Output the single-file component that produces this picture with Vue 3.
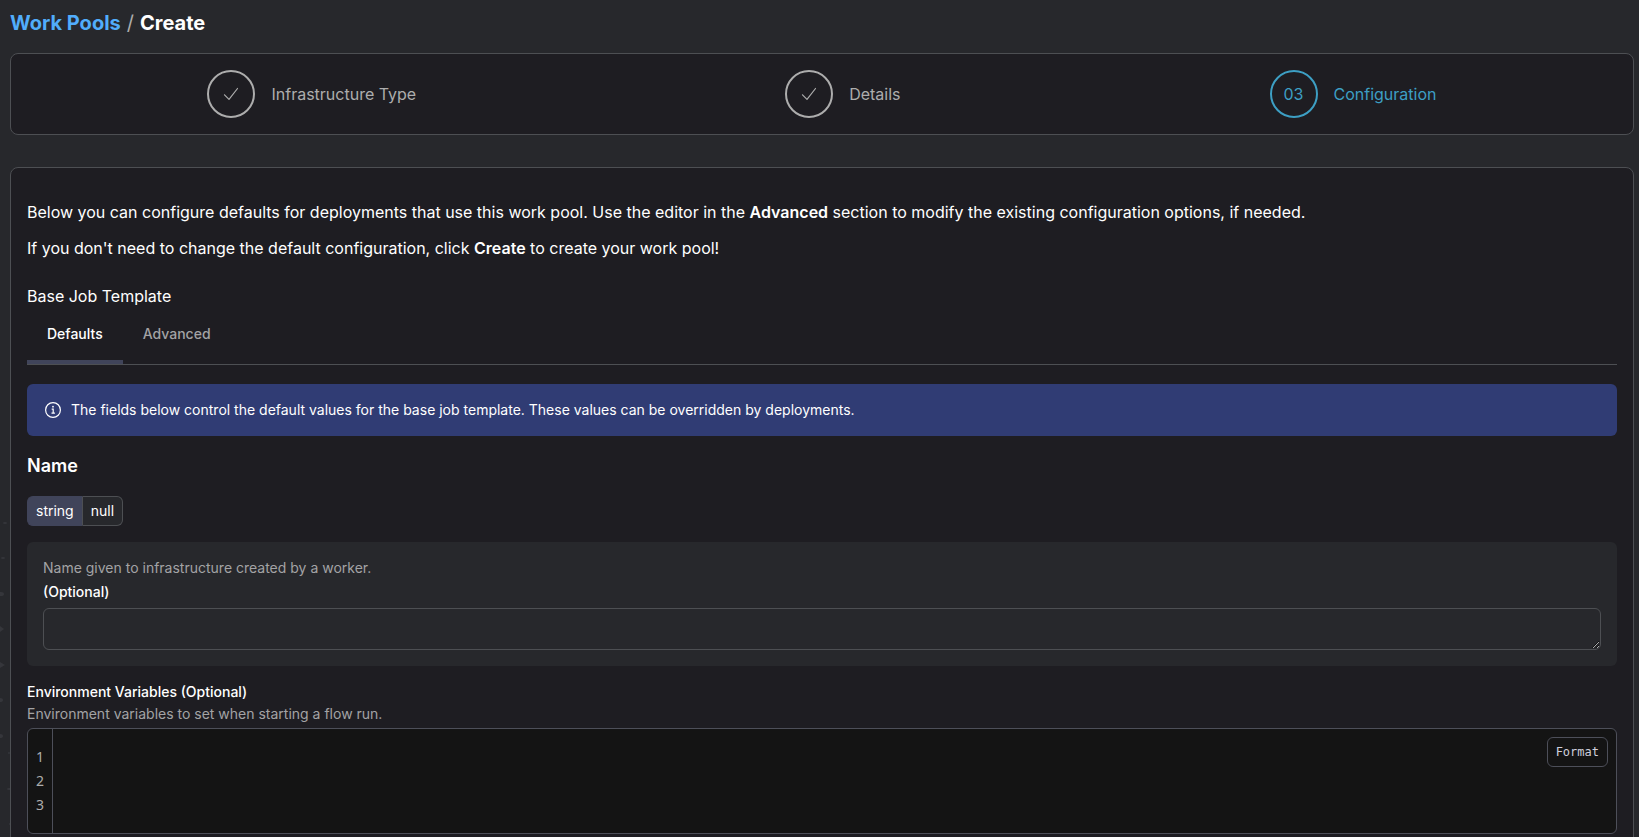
<script setup>
import { ref } from 'vue'

const steps = [
  { number: '01', label: 'Infrastructure Type', done: true },
  { number: '02', label: 'Details', done: true },
  { number: '03', label: 'Configuration', done: false },
]
const tabs = ['Defaults', 'Advanced']
const activeTab = ref('Defaults')
const types = ['string', 'null']
const activeType = ref('string')
const name = ref('')
const variables = ref('')
</script>

<template>
  <div class="page">
    <svg class="dots" width="10" height="340" viewBox="0 0 10 340" aria-hidden="true">
      <ellipse cx="5" cy="23" rx="2" ry="1" />
      <ellipse cx="3" cy="58" rx="2" ry="1" />
      <ellipse cx="1" cy="94" rx="3" ry="2" />
      <path d="M0 126 L4 129 L0 132 Z" />
      <path d="M0 162 L5 165 L0 168 Z" />
      <ellipse cx="0" cy="200" rx="3" ry="2" />
      <ellipse cx="0" cy="236" rx="3" ry="2" />
      <ellipse cx="9" cy="253" rx="1" ry="1" />
      <ellipse cx="9" cy="289" rx="2" ry="1" />
      <ellipse cx="10" cy="324" rx="1" ry="1" />
    </svg>

    <nav class="crumbs" aria-label="Breadcrumb">
      <a href="#work-pools">Work Pools</a>
      <span class="slash">/</span>
      <h1>Create</h1>
    </nav>

    <ol class="steps">
      <li v-for="step in steps" :key="step.number" class="step" :class="{ current: !step.done }">
        <span class="circle">
          <svg v-if="step.done" width="16" height="16" viewBox="0 0 16 16" aria-hidden="true">
            <path d="M1.5 8.8 L6 13.4 L14.5 2.5" />
          </svg>
          <template v-else>{{ step.number }}</template>
        </span>
        <span>{{ step.label }}</span>
      </li>
    </ol>

    <main class="card">
      <div class="intro">
        <p>Below you can configure defaults for deployments that use this work pool. Use the editor in the <strong>Advanced</strong> section to modify the existing configuration options, if needed.</p>
        <p>If you don't need to change the default configuration, click <strong>Create</strong> to create your work pool!</p>
      </div>

      <h2 class="template-title">Base Job Template</h2>
      <div class="tabs" role="tablist">
        <button
          v-for="tab in tabs"
          :key="tab"
          type="button"
          role="tab"
          class="tab"
          :class="{ active: tab === activeTab }"
          :aria-selected="tab === activeTab"
          @click="activeTab = tab"
        >{{ tab }}</button>
      </div>

      <div class="message">
        <svg width="18" height="18" viewBox="0 0 18 18" aria-hidden="true">
          <circle cx="9" cy="9" r="7.4" />
          <path d="M7.7 8.2 H9.2 V12 M7.5 12.2 H10.9" />
          <circle class="point" cx="9" cy="5.7" r="0.9" />
        </svg>
        <span>The fields below control the default values for the base job template. These values can be overridden by deployments.</span>
      </div>

      <h3 class="field-title">Name</h3>
      <div class="types">
        <button
          v-for="type in types"
          :key="type"
          type="button"
          :class="{ active: type === activeType }"
          :aria-pressed="type === activeType"
          @click="activeType = type"
        >{{ type }}</button>
      </div>

      <section class="panel">
        <p class="hint">Name given to infrastructure created by a worker.</p>
        <label for="name">(Optional)</label>
        <textarea id="name" v-model="name" class="name-input" rows="1"></textarea>
      </section>

      <section class="variables">
        <label for="variables">Environment Variables (Optional)</label>
        <p class="hint">Environment variables to set when starting a flow run.</p>
        <div class="editor">
          <div class="gutter" aria-hidden="true">
            <span v-for="line in 3" :key="line">{{ line }}</span>
          </div>
          <textarea id="variables" v-model="variables" class="code" rows="3" spellcheck="false"></textarea>
          <button type="button" class="format">Format</button>
        </div>
      </section>
    </main>
  </div>
</template>

<style>
body {
  background: #27282c;
}
</style>

<style scoped>
.page,
.page * {
  box-sizing: border-box;
}

.page {
  position: relative;
  height: 100vh;
  overflow: hidden;
  padding: 9px 5px 0 10px;
  background: #27282c;
  color: #fff;
  font: 400 16px/24px Inter, "Liberation Sans", sans-serif;
}

h1, h2, h3, p, ol {
  margin: 0;
  padding: 0;
}

button, textarea {
  font: inherit;
  color: inherit;
}

.dots {
  position: absolute;
  left: 0;
  top: 500px;
  fill: #35363b;
}

.crumbs {
  display: flex;
  gap: 6px;
  font-size: 20px;
  line-height: 28px;
}

.crumbs a {
  color: #51adfb;
  font-weight: 700;
  text-decoration: none;
}

.slash {
  color: #adadad;
}

.crumbs h1 {
  font-size: 20px;
  font-weight: 700;
}

.steps {
  display: flex;
  justify-content: space-around;
  margin-top: 16px;
  padding: 16px 12px;
  border: 1px solid #4d4f53;
  border-radius: 8px;
  background: #1e1d22;
  list-style: none;
}

.step {
  display: flex;
  align-items: center;
  gap: 16px;
  color: #adadad;
}

.circle {
  display: flex;
  align-items: center;
  justify-content: center;
  width: 48px;
  height: 48px;
  border: 2px solid #adadad;
  border-radius: 50%;
}

.circle svg {
  fill: none;
  stroke: #adadad;
  stroke-width: 1.2;
  stroke-linecap: round;
  stroke-linejoin: round;
}

.step.current {
  color: #3d9fc4;
}

.step.current .circle {
  border-color: #3d9fc4;
}

.card {
  min-height: 100%;
  margin-top: 32px;
  padding: 32px 16px;
  border: 1px solid #4d4f53;
  border-radius: 8px;
  background: #1e1d22;
}

.intro {
  display: grid;
  gap: 12px;
}

strong {
  font-weight: 600;
}

.template-title {
  margin-top: 24px;
  font-size: 16px;
  font-weight: 400;
}

.tabs {
  display: flex;
  border-bottom: 1px solid #4d4f53;
}

.tab {
  height: 56px;
  margin: 0;
  padding: 16px 20px;
  border: 0;
  border-bottom: 4px solid transparent;
  background: none;
  color: #a3a3a5;
  font-size: 14px;
  font-weight: 500;
  line-height: 20px;
}

.tab.active {
  border-bottom-color: #40445a;
  color: #fff;
}

.message {
  display: flex;
  align-items: center;
  gap: 9px;
  margin-top: 19px;
  padding: 16px 17px;
  border-radius: 6px;
  background: #303c74;
  font-size: 14px;
  line-height: 20px;
}

.message svg {
  fill: none;
  stroke: #fff;
  stroke-width: 1.2;
}

.message .point {
  fill: #fff;
  stroke: none;
}

.field-title {
  margin-top: 16px;
  font-size: 18px;
  font-weight: 600;
  line-height: 28px;
}

.types {
  display: flex;
  margin-top: 16px;
}

.types button {
  padding: 4px 8px;
  border: 1px solid #4d4f53;
  border-left-width: 0;
  background: #27282c;
  font-size: 14px;
  line-height: 20px;
}

.types button:first-child {
  border-left-width: 1px;
  border-radius: 6px 0 0 6px;
}

.types button:last-child {
  border-radius: 0 6px 6px 0;
}

.types button.active {
  border-color: #40445a #4d4f53 #40445a #40445a;
  background: #40445a;
}

.panel {
  display: grid;
  margin-top: 16px;
  padding: 16px;
  border-radius: 6px;
  background: #27282c;
}

.hint {
  color: #a3a3a5;
  font-size: 14px;
  line-height: 20px;
}

label {
  display: block;
  font-size: 14px;
  font-weight: 500;
  line-height: 24px;
}

.name-input {
  display: block;
  width: 100%;
  height: 42px;
  margin-top: 4px;
  padding: 8px 12px;
  border: 1px solid #4d4f53;
  border-radius: 6px;
  background: transparent;
  color-scheme: dark;
  resize: vertical;
}

.panel .hint {
  margin-bottom: 2px;
}

.variables {
  margin-top: 14px;
}

.editor {
  position: relative;
  display: flex;
  overflow: hidden;
  margin-top: 4px;
  border: 1px solid #4d4f59;
  border-radius: 6px;
  background: #141414;
  font: 400 14px/24px "DejaVu Sans Mono", monospace;
}

.gutter {
  display: grid;
  padding: 16px 8px;
  border-right: 1px solid #4d4f59;
  color: #adadad;
  font-family: "Noto Sans", sans-serif;
}

.code {
  flex: 1;
  padding: 16px 8px;
  border: 0;
  background: transparent;
  outline: 0;
  resize: none;
}

.format {
  position: absolute;
  top: 8px;
  right: 8px;
  padding: 4px 8px;
  border: 1px solid #4d4f59;
  border-radius: 6px;
  background: #141414;
  color: #cfcfdc;
  font-size: 12px;
  line-height: 20px;
}
</style>
